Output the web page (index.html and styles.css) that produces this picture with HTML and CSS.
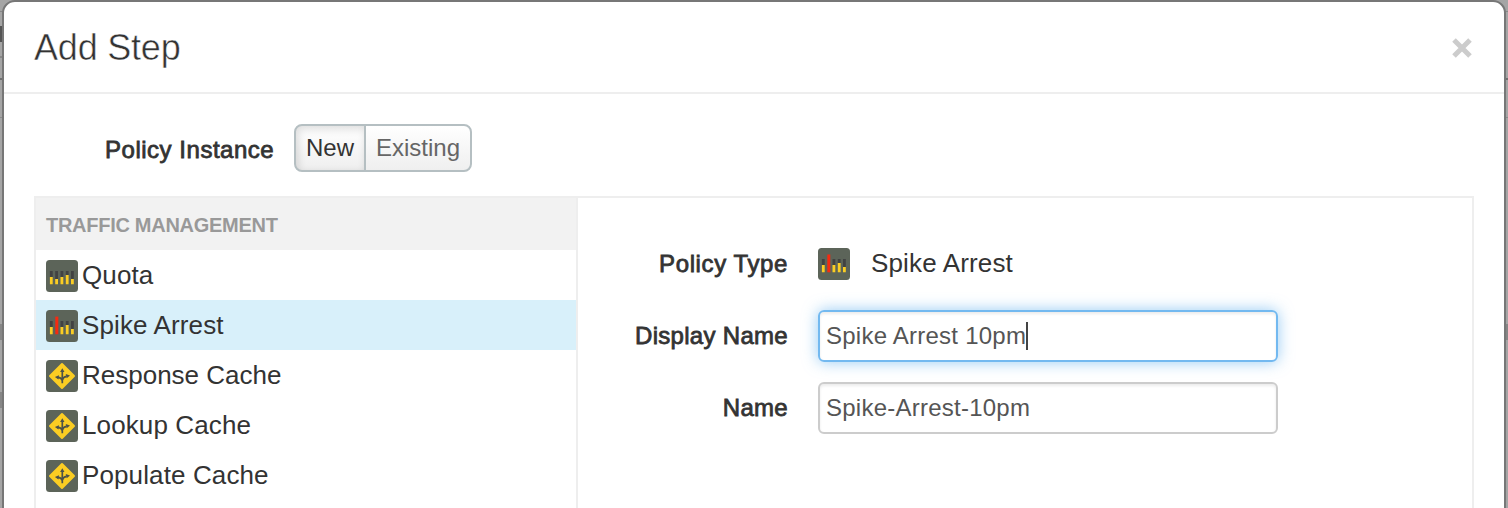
FILE: index.html
```html
<!DOCTYPE html>
<html lang="en">
<head>
<meta charset="utf-8">
<title>Add Step</title>
<link rel="stylesheet" href="styles.css">
</head>
<body>
<svg class="defs" width="0" height="0" aria-hidden="true">
  <symbol id="quota" viewBox="0 0 32 32">
    <rect width="32" height="32" rx="3.5" fill="#5c6459"/>
    <path d="M5.3 11v6M10.6 11v8M15.9 11v6M21.2 11v4M26.4 11v8" stroke="#414242" stroke-width="2.8"/>
    <path d="M5.3 17v7.3M10.6 19v5.3M15.9 17v7.3M21.2 15v9.3M26.4 19v5.3" stroke="#fbcd23" stroke-width="2.8"/>
  </symbol>
  <symbol id="spike" viewBox="0 0 32 32">
    <rect width="32" height="32" rx="3.5" fill="#5c6459"/>
    <path d="M5.3 11v6M15.9 11v6M21.2 11v4M26.4 11v8" stroke="#414242" stroke-width="2.8"/>
    <path d="M5.3 17v7.3M15.9 17v7.3M21.2 15v9.3M26.4 19v5.3" stroke="#fbcd23" stroke-width="2.8"/>
    <path d="M10.8 6.6v17.7" stroke="#f52a10" stroke-width="3"/>
  </symbol>
  <symbol id="cache" viewBox="0 0 32 32">
    <rect width="32" height="32" rx="3.5" fill="#5c6459"/>
    <path d="M16 4 28 16 16 28 4 16Z" fill="#fbcd23" stroke="#fbcd23" stroke-width="2" stroke-linejoin="round"/>
    <path d="M16.3 23.3V11M16 20.5Q15.6 17.6 11.5 17.4M16.4 20Q17 17.2 20.5 16.4" fill="none" stroke="#4c5148" stroke-width="1.7"/>
    <path d="M16.3 8.2l2.2 3.8h-4.4zM8.9 17.1l4.1-1.9-.5 4.2zM24 15.6l-4.3-1.5 1 4.1z" fill="#4c5148"/>
  </symbol>
</svg>
<div class="modal">
  <header class="modal-header">
    <h1 class="title">Add Step</h1>
    <button class="close" aria-label="Close"><svg width="20" height="20" viewBox="0 0 20 20"><path d="M2 2 18 18M18 2 2 18" stroke="#ccc" stroke-width="5"/></svg></button>
  </header>
  <div class="instance">
    <span class="label instance-label">Policy Instance</span>
    <div class="toggle"><button class="option active">New</button><button class="option existing">Existing</button></div>
  </div>
  <div class="panel">
    <nav class="policies">
      <h2 class="group">TRAFFIC MANAGEMENT</h2>
      <div class="policy"><svg class="icon"><use href="#quota"/></svg><span>Quota</span></div>
      <div class="policy selected"><svg class="icon"><use href="#spike"/></svg><span>Spike Arrest</span></div>
      <div class="policy"><svg class="icon"><use href="#cache"/></svg><span class="tight">Response Cache</span></div>
      <div class="policy"><svg class="icon"><use href="#cache"/></svg><span>Lookup Cache</span></div>
      <div class="policy"><svg class="icon"><use href="#cache"/></svg><span>Populate Cache</span></div>
    </nav>
    <div class="form">
      <span class="label type-label">Policy Type</span>
      <div class="type"><svg class="icon"><use href="#spike"/></svg><span>Spike Arrest</span></div>
      <span class="label">Display Name</span>
      <div class="field focused"><span>Spike Arrest 10pm</span><i class="caret"></i></div>
      <span class="label">Name</span>
      <div class="field"><span>Spike-Arrest-10pm</span></div>
    </div>
  </div>
</div>
</body>
</html>
```

FILE: styles.css
```css
* { box-sizing: border-box; }
body {
  margin: 0;
  height: 508px;
  overflow: hidden;
  padding: 0 2px;
  font-family: "Liberation Sans", Arial, sans-serif;
  font-size: 24px;
  color: #333;
  background:
    linear-gradient(#555, #555) 0 26px / 2px 16px no-repeat,
    linear-gradient(#888, #888) 0 11px / 100% 1px no-repeat,
    linear-gradient(#888, #888) 0 56px / 4px 2px no-repeat,
    linear-gradient(#707070, #707070) 0 78px / 100% 2px no-repeat,
    linear-gradient(#8b8b8b, #8b8b8b) 0 117px / 100% 1px no-repeat,
    linear-gradient(#868686, #868686) 0 324px / 100% 16px no-repeat,
    linear-gradient(#868686, #868686) 0 392px / 4px 16px no-repeat,
    #a5a5a5;
}
.defs { position: absolute; }
button { font: inherit; border: 0; padding: 0; background: none; }
h1, h2 { margin: 0; }
.modal {
  height: 530px;
  background: #fff;
  border: 2px solid #777;
  border-radius: 13px;
  overflow: hidden;
}
.modal-header {
  display: flex;
  justify-content: space-between;
  height: 92px;
  padding: 25px 32px 0 30px;
  border-bottom: 2px solid #eee;
}
.title {
  font-size: 36px;
  line-height: 41px;
  font-weight: 400;
  -webkit-text-stroke: .5px #fff;
  letter-spacing: -.2px;
}
.close { height: 20px; margin-top: 11px; line-height: 0; }
.instance { display: flex; align-items: center; height: 48px; margin: 30px 0 24px 101px; }
.label {
  line-height: 28px;
  letter-spacing: .3px;
  -webkit-text-stroke: .8px #333;
  white-space: nowrap;
}
.instance-label { width: 189px; padding-top: 4px; letter-spacing: .52px; }
.toggle {
  display: flex;
  width: 178px;
  height: 48px;
  border: 2px solid #b5bfc2;
  border-radius: 8px;
  overflow: hidden;
  background: linear-gradient(#fff, #efefef);
}
.option { flex: 1; color: #666; padding-bottom: 1px; }
.active {
  flex: 0 0 70px;
  color: #333;
  border-right: 2px solid #b5bfc2;
  box-shadow: inset 2px 3px 8px rgba(0, 0, 0, .14);
}
.panel {
  display: flex;
  width: 1440px;
  height: 330px;
  margin-left: 30px;
  border: 2px solid #eee;
}
.policies { width: 542px; border-right: 2px solid #eee; font-size: 26px; letter-spacing: .12px; }
.tight { letter-spacing: 0; }
.group {
  height: 52px;
  padding-left: 10px;
  background: #f2f2f2;
  color: #999;
  font-size: 20px;
  line-height: 54px;
  letter-spacing: -.28px;
}
.policy { display: flex; align-items: center; height: 50px; padding-left: 10px; gap: 4px; }
.policy .icon { margin-top: 2px; }
.selected { background: #d8f0fa; }
.icon { width: 32px; height: 32px; flex: none; }
.form {
  display: grid;
  grid-template-columns: 210px 460px;
  grid-template-rows: 42px 52px 52px;
  gap: 20px 30px;
  align-content: start;
  padding-top: 50px;
}
.form .label { justify-self: end; align-self: center; }
.form .type-label { align-self: start; padding-top: 2px; letter-spacing: .6px; }
.type { display: flex; gap: 21px; height: 30px; align-items: center; font-size: 26px; letter-spacing: .15px; }
.type .icon { margin-top: 2px; }
.field {
  display: flex;
  align-items: center;
  height: 52px;
  padding: 0 6px 1px;
  border: 2px solid #ccc;
  border-radius: 6px;
  color: #555;
  letter-spacing: .24px;
  box-shadow: inset 0 2px 3px rgba(0, 0, 0, .08);
}
.focused {
  border-color: #73b9f0;
  box-shadow: inset 0 2px 3px rgba(0, 0, 0, .08), 0 0 15px rgba(82, 168, 236, .6);
}
.caret { width: 2px; height: 28px; background: #444; }
```
